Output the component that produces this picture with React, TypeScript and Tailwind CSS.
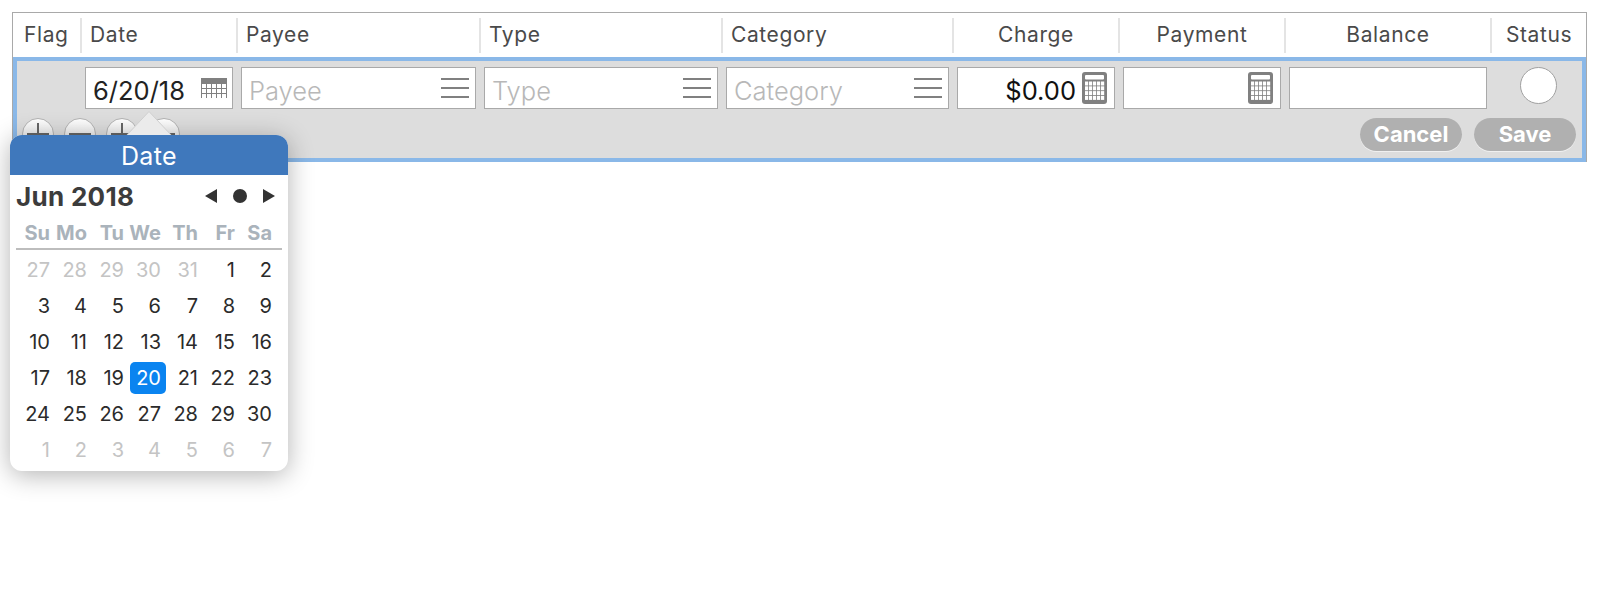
import React from "react";

const weeks = [
  ["27", "28", "29", "30", "31", "1", "2"],
  ["3", "4", "5", "6", "7", "8", "9"],
  ["10", "11", "12", "13", "14", "15", "16"],
  ["17", "18", "19", "20", "21", "22", "23"],
  ["24", "25", "26", "27", "28", "29", "30"],
  ["1", "2", "3", "4", "5", "6", "7"],
];

const weekDays = ["Su", "Mo", "Tu", "We", "Th", "Fr", "Sa"];

const columns = [
  { label: "Flag", width: "w-[69px]", align: "pl-[11px]" },
  { label: "Date", width: "w-[156px]", align: "pl-[8px]" },
  { label: "Payee", width: "w-[243px]", align: "pl-[8px]" },
  { label: "Type", width: "w-[242px]", align: "pl-[8px]" },
  { label: "Category", width: "w-[231px]", align: "pl-[8px]" },
  { label: "Charge", width: "w-[166px]", align: "justify-center" },
  { label: "Payment", width: "w-[166px]", align: "justify-center" },
  { label: "Balance", width: "w-[206px]", align: "justify-center" },
];

function ListIcon() {
  return (
    <svg width="28" height="20" viewBox="0 0 28 20" className="shrink-0">
      <rect x="0" y="0" width="28" height="2" fill="#808080" />
      <rect x="0" y="9" width="28" height="2" fill="#808080" />
      <rect x="0" y="18" width="28" height="2" fill="#808080" />
    </svg>
  );
}

function CalendarIcon() {
  const cells = [];
  for (let r = 0; r < 3; r++) {
    for (let c = 0; c < 5; c++) {
      cells.push(<rect key={r + "-" + c} x={1 + c * 5} y={6 + r * 5} width="4" height="4" fill="#fff" />);
    }
  }
  return (
    <svg width="26" height="20" viewBox="0 0 26 20" className="shrink-0">
      <rect width="26" height="20" fill="#808080" />
      {cells}
    </svg>
  );
}

function CalculatorIcon() {
  const keys = [];
  for (let r = 0; r < 4; r++) {
    for (let c = 0; c < 5; c++) {
      keys.push(<rect key={r + "-" + c} x={3 + c * 4} y={9.5 + r * 4.8} width="3.2" height="4" fill="#fff" />);
    }
  }
  return (
    <svg width="25" height="32" viewBox="0 0 25 32" className="shrink-0">
      <rect width="25" height="32" rx="3" fill="#808080" />
      <rect x="3" y="3" width="19" height="4.5" rx="1" fill="#fff" />
      {keys}
    </svg>
  );
}

function RoundButton({ glyph }: { glyph: "plus" | "minus" }) {
  return (
    <div className="relative h-[32px] w-[32px] shrink-0 rounded-full border border-[#b4b4b4] bg-gradient-to-b from-white to-[#dcdcdc]">
      {glyph === "plus" && <div className="absolute left-[14px] top-[4px] h-[24px] w-[2px] bg-[#666]" />}
      <div className="absolute left-[4px] top-[14px] h-[2px] w-[22px] bg-[#666]" />
    </div>
  );
}

function Field({ className, children }: { className: string; children?: React.ReactNode }) {
  return (
    <div className={"flex h-[42px] shrink-0 items-center border border-[#a9a9a9] bg-white " + className}>
      {children}
    </div>
  );
}

function DatePopover() {
  return (
    <div className="absolute left-[10px] top-[135px] z-10 h-[336px] w-[278px] rounded-[12px] bg-white shadow-[0_4px_26px_rgba(0,0,0,0.3)]">
      {/* pointer above the popover */}
      <svg width="46" height="25" viewBox="0 0 46 25" className="absolute left-[116px] top-[-24px]">
        <polygon points="0,25 23,0.5 46,25" fill="#ebebeb" stroke="#cfcfcf" />
      </svg>
      <div className="relative flex h-[40px] items-center justify-center rounded-t-[12px] bg-[#3f78bc] pt-[3px] text-[25px] tracking-[0.4px] text-white">
        Date
      </div>
      <div className="flex h-[42px] items-center justify-between pl-[6px] pr-[13px]">
        <span className="text-[26px] font-bold tracking-[0.3px] text-[#3c3c3c]">Jun 2018</span>
        <div className="flex items-center gap-[16px]">
          <svg width="12" height="14" viewBox="0 0 12 14">
            <polygon points="12,0 12,14 0,7" fill="#333" />
          </svg>
          <div className="h-[14px] w-[14px] rounded-full bg-[#333]" />
          <svg width="12" height="14" viewBox="0 0 12 14">
            <polygon points="0,0 0,14 12,7" fill="#333" />
          </svg>
        </div>
      </div>
      <div className="mx-[6px] flex h-[33px] border-b-2 border-[#bdbdbd] pl-[2px] pt-[1px]">
        {weekDays.map((d) => (
          <div key={d} className="flex w-[37px] items-center justify-end pr-[5px] text-[20px] font-bold text-[#aab3bb]">
            {d}
          </div>
        ))}
      </div>
      <div className="ml-[8px] mt-[2px] grid w-[259px] grid-cols-7">
        {weeks.map((week, r) =>
          week.map((day, c) => {
            const muted = (r === 0 && c < 5) || r === 5;
            const selected = r === 3 && c === 3;
            return (
              <div key={r + "-" + c} className="flex h-[36px] items-center justify-end">
                <span
                  className={
                    "flex h-[32px] w-[36px] items-center justify-end rounded-[5px] pr-[5px] text-[20px] " +
                    (selected ? "bg-[#0a84f0] text-white" : muted ? "text-[#c4c4c4]" : "text-[#2b2b2b]")
                  }
                >
                  {day}
                </span>
              </div>
            );
          })
        )}
      </div>
    </div>
  );
}

export default function App(): React.ReactElement {
  return (
    <div className="relative h-[600px] w-[1600px] overflow-hidden bg-white pl-[12px] pt-[12px] font-['Inter',sans-serif]">
      <div className="w-[1575px] border border-b-0 border-[#a9a9a9]">
        {/* Column headers */}
        <div className="flex h-[44px] items-center text-[21px] tracking-[0.6px] text-[#4a4a4a]">
          {columns.map((col) => (
            <div key={col.label} className={"flex h-[35px] items-center border-r-2 border-[#e4e4e4] " + col.width + " " + col.align}>
              {col.label}
            </div>
          ))}
          <div className="flex flex-1 justify-center">Status</div>
        </div>

        {/* Edit row */}
        <div className="h-[105px] border-x-[4px] border-y-[4px] border-[#8ab8e8] bg-[#dddddd]">
          <div className="flex items-center gap-[8px] pl-[68px] pt-[6px]">
            <Field className="w-[148px] justify-between pl-[7px] pr-[5px] text-[25.5px] text-[#222]">
              <span className="mt-[6px]">6/20/18</span>
              <CalendarIcon />
            </Field>
            <Field className="w-[235px] justify-between pl-[7px] pr-[6px] text-[25.5px] font-light text-[#b8b8b8]">
              <span className="mt-[6px]">Payee</span>
              <ListIcon />
            </Field>
            <Field className="w-[234px] justify-between pl-[7px] pr-[6px] text-[25.5px] font-light text-[#b8b8b8]">
              <span className="mt-[6px]">Type</span>
              <ListIcon />
            </Field>
            <Field className="w-[223px] justify-between pl-[7px] pr-[6px] text-[25.5px] font-light text-[#b8b8b8]">
              <span className="mt-[6px]">Category</span>
              <ListIcon />
            </Field>
            <Field className="w-[158px] justify-end gap-[6px] pr-[7px] text-[25.5px] text-[#111]">
              <span className="mt-[6px]">$0.00</span>
              <CalculatorIcon />
            </Field>
            <Field className="w-[158px] justify-end pr-[7px]">
              <CalculatorIcon />
            </Field>
            <Field className="w-[198px]" />
            <div className="ml-[25px] mt-[-6px] h-[37px] w-[37px] rounded-full border border-[#a0a0a0] bg-white" />
          </div>
          <div className="flex items-start justify-between pl-[5px] pr-[6px]">
            <div className="mt-[9px] flex gap-[10px]">
              <RoundButton glyph="plus" />
              <RoundButton glyph="minus" />
              <RoundButton glyph="plus" />
              <RoundButton glyph="minus" />
            </div>
            <div className="mt-[9px] flex gap-[12px] text-[22px] font-bold text-white">
              <div className="flex h-[33px] w-[102px] items-center justify-center rounded-full bg-[#b0b0b0] shadow-[0_1px_0_#f0f0f0]">Cancel</div>
              <div className="flex h-[33px] w-[102px] items-center justify-center rounded-full bg-[#b0b0b0] shadow-[0_1px_0_#f0f0f0]">Save</div>
            </div>
          </div>
        </div>
      </div>
      <DatePopover />
    </div>
  );
}
